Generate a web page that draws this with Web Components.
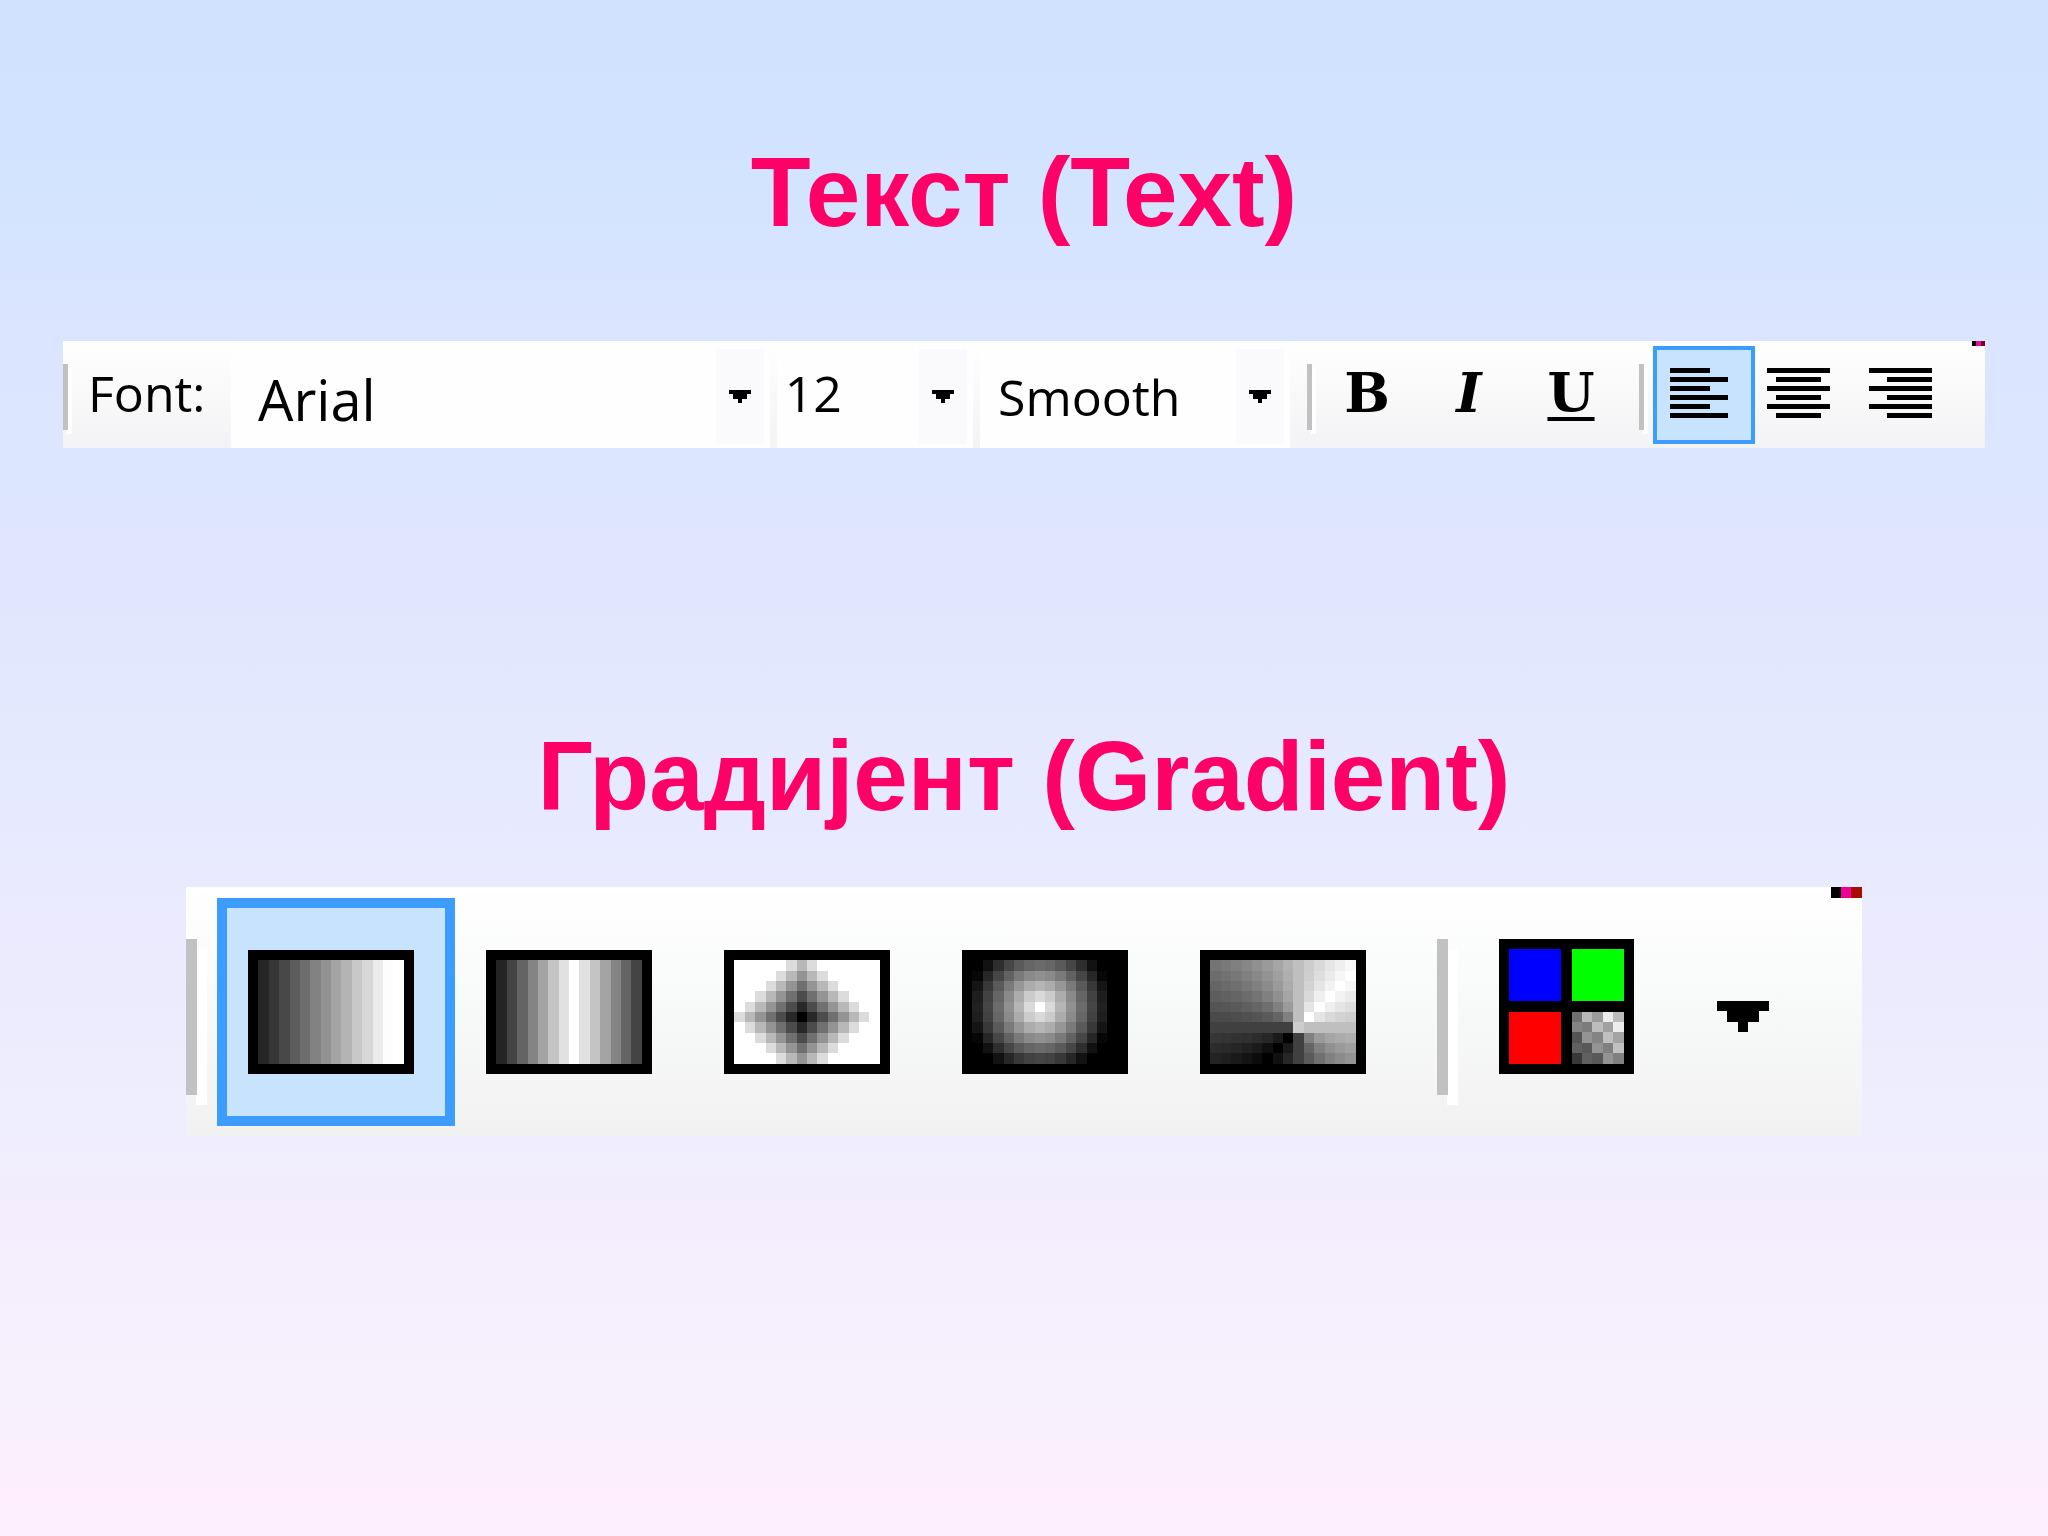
<!DOCTYPE html>
<html lang="sr">
<head>
<meta charset="utf-8">
<title>Текст, Градијент</title>
<style>
  html { min-height: 100%; background: linear-gradient(#d1e2ff 0%, #d3e4ff 13%, #dae4ff 20%, #dce6ff 30%, #e1e6fe 38%, #e6eafe 52%, #ebeafe 60%, #eeeefe 72%, #f4edfd 80%, #f7f1fd 92%, #feeefe 97%, #feeffe 100%); }
  body { margin: 0; font-family: "Open Sans", sans-serif; color: #000; }
</style>
</head>
<body>

<slide-page>
  <slide-title>Текст (Text)</slide-title>

  <tool-bar>
    <bar-line></bar-line>
    <combo-box class="size-font" label="Font:" options="Arial"></combo-box>
    <combo-box class="size-points" name="Size" options="12"></combo-box>
    <combo-box class="size-mode" name="Rendering" options="Smooth"></combo-box>
    <bar-line class="after"></bar-line>
    <tool-button name="Bold"><b>B</b></tool-button>
    <tool-button name="Italic"><i>I</i></tool-button>
    <tool-button name="Underline"><u>U</u></tool-button>
    <bar-line class="last"></bar-line>
    <tool-button name="Align left" active><align-icon side="left"></align-icon></tool-button>
    <tool-button name="Align center"><align-icon side="center"></align-icon></tool-button>
    <tool-button name="Align right"><align-icon side="right"></align-icon></tool-button>
  </tool-bar>

  <slide-title class="second">Градијент (Gradient)</slide-title>

  <tool-bar large>
    <bar-line large></bar-line>
    <tool-button large class="first" name="Linear" active><gradient-icon kind="linear"></gradient-icon></tool-button>
    <tool-button large name="Reflected"><gradient-icon kind="reflected"></gradient-icon></tool-button>
    <tool-button large name="Diamond"><gradient-icon kind="diamond"></gradient-icon></tool-button>
    <tool-button large name="Radial"><gradient-icon kind="radial"></gradient-icon></tool-button>
    <tool-button large name="Conical"><gradient-icon kind="conical"></gradient-icon></tool-button>
    <bar-line large class="middle"></bar-line>
    <channel-button></channel-button>
  </tool-bar>
</slide-page>

<script>
// pequena base: cada componente só define o seu markup
class Base extends HTMLElement {
  connectedCallback() {
    if (this.shadowRoot) return;
    this.attachShadow({ mode: 'open' });
    this.shadowRoot.innerHTML = this.render();
  }
}

customElements.define('slide-page', class extends Base {
  render() {
    return `
      <style>
        :host { display: flex; flex-direction: column; padding: 128px 63px 64px; }
        ::slotted(.second) { margin-top: 264px; }
      </style>
      <slot></slot>`;
  }
});

customElements.define('slide-title', class extends Base {
  render() {
    return `
      <style>
        :host { display: block; }
        h1 {
          margin: 0; text-align: center; color: #ff0066;
          font: bold 98px/128px "Liberation Sans", Arial, sans-serif;
        }
      </style>
      <h1><slot></slot></h1>`;
  }
});

customElements.define('tool-bar', class extends Base {
  render() {
    return `
      <style>
        :host {
          display: flex; align-items: center; position: relative;
          height: 107px; margin-top: 85px;
          background: linear-gradient(#fff, #fafafb 40%, #f3f3f5);
        }
        :host([large]) {
          height: 249px; margin: 47px 123px 0;
          background: linear-gradient(#fff, #f8faf9 45%, #f1f1f1);
        }
        /* three stray pixels in the corner */
        .corner {
          position: absolute; top: 0; right: 0; width: 13px; height: 5px;
          background: linear-gradient(90deg, #000 33%, #ee0a9c 33% 66%, #700420 66%);
        }
        :host([large]) .corner {
          width: 31px; height: 11px;
          background: linear-gradient(90deg, #000 33%, #ec0096 33% 66%, #a80c00 66%);
        }
        ::slotted(.after) { margin-left: 17px; margin-right: 4px; }
        ::slotted(.last) { margin-left: 17px; margin-right: 9px; }
        ::slotted(tool-button:last-child) { margin-right: 26px; }
        ::slotted(.first) { margin-left: 20px; }
        ::slotted(.middle) { margin-left: 30px; margin-right: 51px; }
        ::slotted(.size-font) { flex: 704 1 0; }
        ::slotted(.size-points) { flex: 197 1 0; margin-left: 7px; }
        ::slotted(.size-mode) { flex: 311 1 0; margin-left: 7px; }
      </style>
      <slot></slot>
      <span class="corner"></span>`;
  }
});

customElements.define('bar-line', class extends Base {
  render() {
    return `
      <style>
        :host {
          flex: none; width: 5px; height: 66px; margin-top: 4px;
          background: #c1c1c1; box-shadow: 4px 4px 0 #fff;
        }
        :host([large]) { width: 11px; height: 156px; margin-top: 10px; box-shadow: 10px 10px 0 #fff; }
      </style>`;
  }
});

customElements.define('combo-box', class extends Base {
  render() {
    const label = this.getAttribute('label');
    const name = this.getAttribute('name');
    const options = this.getAttribute('options').split(',');
    return `
      <style>
        :host { display: flex; align-items: center; align-self: stretch; min-width: 0; font-size: 50px; }
        label { flex: none; width: 163px; padding: 0 0 4px 20px; box-sizing: border-box; }
        .field { flex: 1; min-width: 0; align-self: stretch; display: grid; grid-template-columns: 1fr 48px 6px; background: #fefefe; }
        select {
          grid-area: 1 / 1 / 2 / 4; min-width: 0; appearance: none; border: 0; margin: 0;
          padding: 0 0 4px 8px; background: none; font: inherit; color: inherit; border-radius: 0;
        }
        :host(.size-font) select { font-size: 56px; padding: 8px 0 0 27px; }
        :host(.size-mode) select { padding: 4px 0 0 18px; }
        .arrow {
          grid-area: 1 / 2; pointer-events: none; margin: 8px 0 4px;
          background: #faf9fb; display: flex; align-items: center; justify-content: center;
        }
        svg { width: 22px; height: 13px; }
      </style>
      ${label ? `<label for="s">${label}</label>` : ''}
      <div class="field">
        <select id="s" ${name ? `aria-label="${name}"` : ''}>${options.map(o => `<option>${o}</option>`).join('')}</select>
        <span class="arrow"><svg viewBox="0 0 5 3" preserveAspectRatio="none" shape-rendering="crispEdges"><path d="M0 0h5v1H4v1H3v1H2V2H1V1H0z"/></svg></span>
      </div>`;
  }
});

customElements.define('tool-button', class extends Base {
  render() {
    return `
      <style>
        :host { display: block; flex: none; }
        button {
          display: flex; align-items: center; justify-content: center;
          box-sizing: border-box; width: 102px; height: 98px; margin: 0; padding: 0 0 4px;
          border: 4px solid transparent; background: none; color: #000;
          font: bold 54px/60px "DejaVu Serif", serif;
        }
        :host([large]) button { width: 238px; height: 228px; border-width: 10px; padding: 0 10px 0 0; }
        :host([active]) button { border-color: #3c9cff; background: #c8e3fe; }
        ::slotted(u) { text-decoration-thickness: 4px; text-underline-offset: 5px; text-decoration-skip-ink: none; }
      </style>
      <button type="button" aria-label="${this.getAttribute('name')}" aria-pressed="${this.hasAttribute('active')}"><slot></slot></button>`;
  }
});

customElements.define('align-icon', class extends Base {
  render() {
    // [x, width] of the odd and the even lines
    const lines = {
      left: [[1.5, 9], [1.5, 13]],
      center: [[0.5, 14], [2.5, 10]],
      right: [[0.5, 14], [4.5, 10]]
    }[this.getAttribute('side')];
    let rects = '';
    for (let i = 0; i < 6; i++) {
      const [x, w] = lines[i % 2];
      rects += `<rect x="${x}" y="${i * 2}" width="${w}" height="1"/>`;
    }
    return `
      <style>
        :host { display: block; line-height: 0; }
        svg { width: 81px; height: 50px; }
      </style>
      <svg viewBox="0 0 18 11" preserveAspectRatio="none" shape-rendering="crispEdges">${rects}</svg>`;
  }
});

// brilho (0-255) de cada célula da grade 14x10
const shades = {
  linear: x => [38, 54, 72, 92, 110, 130, 146, 164, 180, 200, 216, 236, 253, 255][x],
  reflected: x => [36, 68, 100, 132, 164, 196, 225, 255, 225, 196, 164, 132, 100, 68][x],
  diamond: (x, y) => Math.min(255, [0, 40, 76, 112, 148, 184, 220][Math.abs(x - 6) + Math.abs(y - 5)] ?? 255),
  radial: (x, y) => Math.max(0, 255 - 37 * Math.hypot(x - 6, y - 4)),
  conical: (x, y) => {
    if (x === 8 && y === 6) return 204;
    const angle = Math.atan2(6 - y, x - 8) * 180 / Math.PI;
    let d = Math.abs(angle - 45);
    if (d > 180) d = 360 - d;
    return 255 * (1 - d / 180);
  }
};

customElements.define('gradient-icon', class extends Base {
  render() {
    const shade = shades[this.getAttribute('kind')];
    let cells = '';
    for (let y = 0; y < 10; y++) {
      for (let x = 0; x < 14; x++) {
        const v = Math.round(shade(x, y));
        cells += `<rect x="${x + 1}" y="${y + 1}" width="1" height="1" fill="rgb(${v},${v},${v})"/>`;
      }
    }
    return `
      <style>
        :host { display: block; line-height: 0; }
        svg { width: 166px; height: 124px; }
      </style>
      <svg viewBox="0 0 16 12" preserveAspectRatio="none" shape-rendering="crispEdges"><rect width="16" height="12"/>${cells}</svg>`;
  }
});

customElements.define('channel-button', class extends Base {
  render() {
    const noise = [
      ['70', 'b8', '9c', 'ec', 'bc'],
      ['84', '7c', 'bc', 'a0', 'ec'],
      ['54', '94', '84', 'c0', 'a4'],
      ['60', '58', '94', '80', 'c0'],
      ['38', '60', '58', '94', '80']
    ];
    const cells = noise.map((row, y) => row.map((v, x) =>
      `<rect x="${x + 7}" y="${y + 7}" width="1" height="1" fill="#${v}${v}${v}"/>`).join('')).join('');
    return `
      <style>
        :host { display: block; flex: none; }
        button { display: flex; align-items: center; gap: 83px; border: 0; padding: 0; margin: 0 0 10px; background: none; }
        .grid { width: 135px; height: 135px; }
        .arrow { width: 52px; height: 31px; margin-top: 20px; }
      </style>
      <button type="button" aria-label="Channels">
        <svg class="grid" viewBox="0 0 13 13" shape-rendering="crispEdges">
          <rect width="13" height="13"/>
          <rect x="1" y="1" width="5" height="5" fill="#00f"/>
          <rect x="7" y="1" width="5" height="5" fill="#0f0"/>
          <rect x="1" y="7" width="5" height="5" fill="#f00"/>
          ${cells}
        </svg>
        <svg class="arrow" viewBox="0 0 5 3" preserveAspectRatio="none" shape-rendering="crispEdges"><path d="M0 0h5v1H4v1H3v1H2V2H1V1H0z"/></svg>
      </button>`;
  }
});
</script>
</body>
</html>
